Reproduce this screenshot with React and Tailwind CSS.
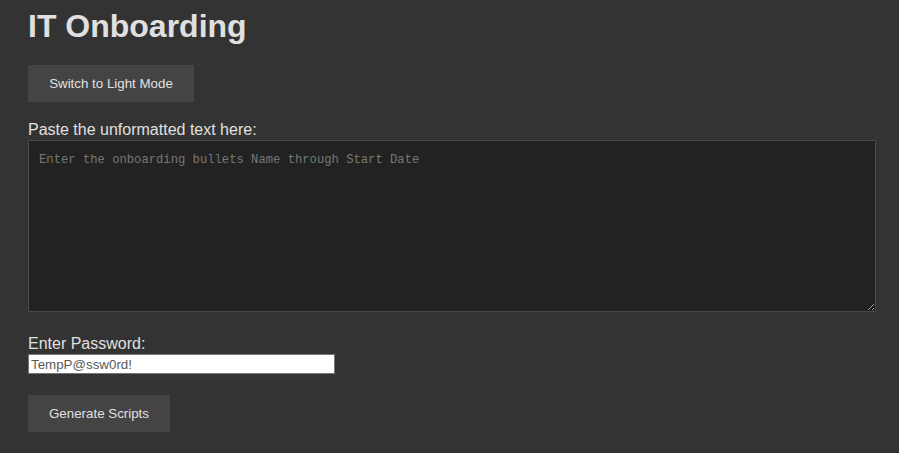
export default function App() {
  return (
    <div className="min-h-[453px] bg-[#333333] pl-[28px] pr-[23px] pt-[8px] font-['Liberation_Sans',Arial,sans-serif] text-[#e0e0e0]">
      <h1 className="text-[32px] font-bold leading-[37px]">IT Onboarding</h1>

      <button className="mt-[20px] block h-[37px] w-[166px] bg-[#444444] text-[13.33px] text-[#e0e0e0]">
        Switch to Light Mode
      </button>

      <label className="mt-[19px] block text-[16px] leading-[18px]">Paste the unformatted text here:</label>
      <textarea
        placeholder="Enter the onboarding bullets Name through Start Date"
        className="mt-[1px] block h-[172px] w-full border border-[#4a4a4a] bg-[#222222] px-[10px] py-[10px] font-['Liberation_Mono',monospace] text-[12.2px] text-[#e0e0e0] placeholder:text-[#777777] outline-none"
      />

      <label className="mt-[23px] block text-[16px] leading-[18px]">Enter Password:</label>
      <input
        type="text"
        defaultValue="TempP@ssw0rd!"
        className="mt-[1px] block h-[20px] w-[307px] border border-[#767676] bg-white px-[2px] text-[13.33px] text-[#5a5a5a] outline-none"
      />

      <button className="mt-[21px] block h-[37px] w-[142px] bg-[#444444] text-[13.33px] text-[#e0e0e0]">
        Generate Scripts
      </button>
    </div>
  );
}
